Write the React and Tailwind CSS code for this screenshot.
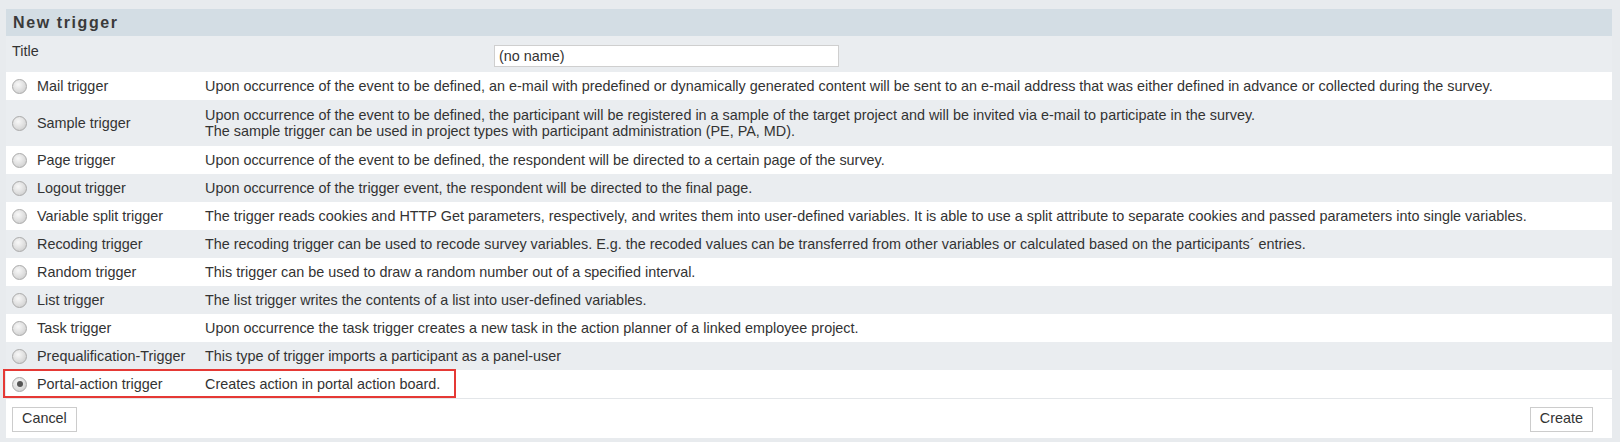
import React from "react";

const rows = [
  { label: "Mail trigger", desc: ["Upon occurrence of the event to be defined, an e-mail with predefined or dynamically generated content will be sent to an e-mail address that was either defined in advance or collected during the survey."] },
  { label: "Sample trigger", desc: ["Upon occurrence of the event to be defined, the participant will be registered in a sample of the target project and will be invited via e-mail to participate in the survey.", "The sample trigger can be used in project types with participant administration (PE, PA, MD)."] },
  { label: "Page trigger", desc: ["Upon occurrence of the event to be defined, the respondent will be directed to a certain page of the survey."] },
  { label: "Logout trigger", desc: ["Upon occurrence of the trigger event, the respondent will be directed to the final page."] },
  { label: "Variable split trigger", desc: ["The trigger reads cookies and HTTP Get parameters, respectively, and writes them into user-defined variables. It is able to use a split attribute to separate cookies and passed parameters into single variables."] },
  { label: "Recoding trigger", desc: ["The recoding trigger can be used to recode survey variables. E.g. the recoded values can be transferred from other variables or calculated based on the participants\u00b4 entries."] },
  { label: "Random trigger", desc: ["This trigger can be used to draw a random number out of a specified interval."] },
  { label: "List trigger", desc: ["The list trigger writes the contents of a list into user-defined variables."] },
  { label: "Task trigger", desc: ["Upon occurrence the task trigger creates a new task in the action planner of a linked employee project."] },
  { label: "Prequalification-Trigger", desc: ["This type of trigger imports a participant as a panel-user"] },
  { label: "Portal-action trigger", desc: ["Creates action in portal action board."], selected: true },
];

function Radio({ checked }) {
  return (
    <span className="relative inline-flex h-[15px] w-[15px] shrink-0 items-center justify-center rounded-full border border-[#aaaaaa] bg-[radial-gradient(circle_at_40%_35%,#f8f8f8_0%,#dedede_55%,#c4c4c4_100%)]">
      {checked && <span className="h-[6px] w-[6px] rounded-full bg-[#555555]" />}
    </span>
  );
}

export default function App() {
  return (
    <div className="w-[1620px] h-[442px] bg-[#e8ebee] pt-[9px] pl-[6px] pr-[8px] font-['Liberation_Sans',Arial,sans-serif] text-[14.4px] text-[#333333]">
      <div className="relative bg-white">
        <div className="h-[27px] bg-[#d3dde4] pl-[7px] flex items-center">
          <span className="text-[16px] font-bold tracking-[1.6px] text-[#3a3a3a]">New trigger</span>
        </div>
        <div className="h-[36px] bg-[#eaedf0] flex items-start">
          <div className="pl-[6px] pt-[7px] leading-[16px] w-[488px]">Title</div>
          <div className="pt-[9px]">
            <div className="w-[345px] h-[22px] border border-[#cfcfcf] bg-white flex items-center pl-[4px] leading-[16px]">(no name)</div>
          </div>
        </div>
        {rows.map((r, i) => (
          <div key={r.label} className={`flex items-center leading-[16px] ${i % 2 === 0 ? "bg-white" : "bg-[#eaedf0]"} ${r.desc.length > 1 ? "py-[7px]" : "py-[6px]"}`}>
            <div className="w-[199px] flex items-center pl-[6px]">
              <Radio checked={r.selected} />
              <span className="ml-[10px] whitespace-nowrap">{r.label}</span>
            </div>
            <div>
              {r.desc.map((d) => (
                <div key={d} className="whitespace-nowrap">{d}</div>
              ))}
            </div>
          </div>
        ))}
        <div className="border-t border-[#e3e6e9] h-[40px] flex items-center justify-between pl-[6px] pr-[19px] pt-[1px]">
          <button className="h-[25px] px-[9px] border border-[#cccccc] bg-white text-[14.4px] text-[#333]">Cancel</button>
          <button className="h-[25px] px-[9px] border border-[#cccccc] bg-white text-[14.4px] text-[#333]">Create</button>
        </div>
        <div className="absolute left-[-3px] top-[360px] w-[453px] h-[29px] border-[2px] border-[#e53935] pointer-events-none" />
      </div>
    </div>
  );
}
